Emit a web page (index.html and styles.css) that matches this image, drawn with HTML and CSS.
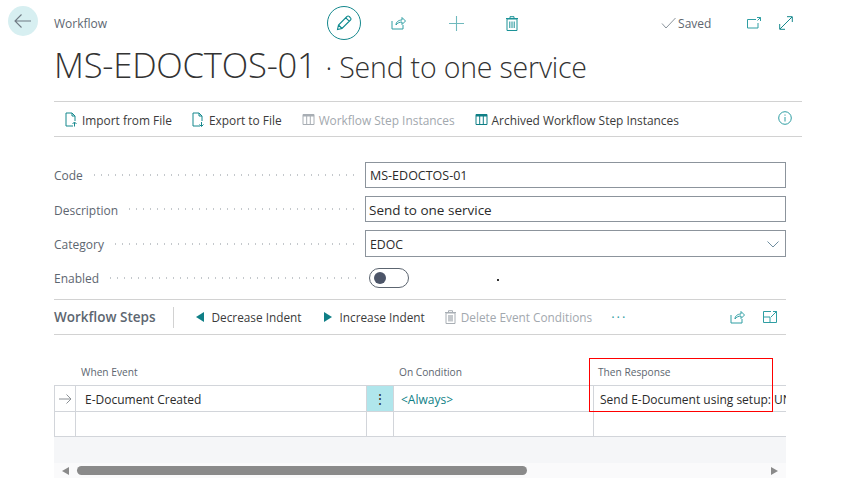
FILE: index.html
```html
<!DOCTYPE html>
<html lang="en">
<head>
<meta charset="utf-8">
<title>Workflow</title>
<link rel="stylesheet" href="styles.css">
</head>
<body>
<div class="page">
  <header class="topbar">
    <button class="back" aria-label="Back"><svg width="20" height="16" viewBox="0 0 20 16"><path d="M18 8H2M8.500 1.500 2 8l6.500 6.500" fill="none" stroke="#6f7a84" stroke-width="1.100"/></svg></button>
    <span class="crumb">Workflow</span>
    <div class="actions">
      <span class="edit"><svg width="18" height="18" viewBox="0 0 18 18"><path d="M2.500 15.500l1-4.500L12 2.500a1.500 1.500 0 0 1 2.200 0l1.300 1.300a1.500 1.500 0 0 1 0 2.200L7 14.500zM3.500 11 7 14.500M10.800 3.800l3.400 3.400" fill="none" stroke="#0f8a8f" stroke-width="1.100"/></svg></span>
      <svg class="act-share" width="15" height="14" viewBox="0 0 15 14"><path d="M1 5v8h11V9M5 9c0-3 2.500-5 6-5V1.500L14.500 5 11 8.500V6C8.500 6 6.500 7 5 9z" fill="none" stroke="#2f9ea3" stroke-width="1"/></svg>
      <svg class="act-plus" width="15" height="15" viewBox="0 0 15 15"><path d="M7.500 0v15M0 7.500h15" stroke="#6fb9bd" stroke-width="1.100"/></svg>
      <svg class="act-trash" width="12" height="15" viewBox="0 0 12 15"><path d="M1 3h10v11.500H1zM0 2.500h12M4 2.500V.7h4v1.800" fill="none" stroke="#1b9297" stroke-width="1"/><path d="M3.800 5.500v6.500M6 5.500v6.500M8.200 5.500v6.500" stroke="#1b9297" stroke-width="1"/></svg>
    </div>
    <div class="status">
      <svg width="15" height="12" viewBox="0 0 15 12"><path d="M1 6.500 5 11 14.500 1" fill="none" stroke="#8a939b" stroke-width="1"/></svg>
      <span>Saved</span>
    </div>
    <svg class="open-new" width="14" height="12" viewBox="0 0 14 12"><path d="M9 2.500H.5v8.500h10.500V6M10 .5h3.500V4M13.500.5 10.500 3.500" fill="none" stroke="#2f9ea3" stroke-width="1"/></svg>
    <svg class="expand" width="14" height="14" viewBox="0 0 14 14"><path d="M1 13 13 1M8 .7h5.300V6M.7 8v5.300H6" fill="none" stroke="#15888d" stroke-width="1"/></svg>
  </header>

  <h1 class="title">MS-EDOCTOS-01 <span class="title-sub">· Send to one service</span></h1>

  <nav class="ribbon">
    <span class="rb"><svg width="13" height="15" viewBox="0 0 13 15"><path d="M8 14H1V1h6l3 3v5M7 1v3h3" fill="none" stroke="#15888d"/><path d="M9.500 14.500v-4M7.500 12l2-2 2 2" fill="none" stroke="#15888d"/></svg>Import from File</span>
    <span class="rb"><svg width="13" height="15" viewBox="0 0 13 15"><path d="M8 14H1V1h6l3 3v5M7 1v3h3" fill="none" stroke="#15888d"/><path d="M9.500 10v4M7.500 12.500l2 2 2-2" fill="none" stroke="#15888d"/></svg>Export to File</span>
    <span class="rb off"><svg width="13" height="11" viewBox="0 0 12 11"><path d="M.5.500h11v10H.5zM4.200.5v10M7.800.5v10" fill="none" stroke="#a8aeb4"/><path d="M.5 1h11v1.500H.5z" fill="#a8aeb4"/></svg>Workflow Step Instances</span>
    <span class="rb"><svg width="13" height="11" viewBox="0 0 12 11"><path d="M.5.500h11v10H.5zM4.200.5v10M7.800.5v10" fill="none" stroke="#0f7f86"/><path d="M.5 1h11v1.500H.5z" fill="#0f7f86"/></svg>Archived Workflow Step Instances</span>
    <svg class="info" width="14" height="14" viewBox="0 0 14 14"><circle cx="7" cy="7" r="6.300" fill="none" stroke="#2f9ea3"/><path d="M7 6v4.500M7 3.500v1.200" stroke="#2f9ea3"/></svg>
  </nav>

  <section class="form">
    <div class="field"><span class="lbl">Code</span><span class="dots"></span><div class="box">MS-EDOCTOS-01</div></div>
    <div class="field"><span class="lbl low">Description</span><span class="dots"></span><div class="box big">Send to one service</div></div>
    <div class="field f-cat"><span class="lbl low">Category</span><span class="dots"></span><div class="box sel">EDOC<svg width="12" height="7" viewBox="0 0 12 7"><path d="M.5.500 6 6 11.500.5" fill="none" stroke="#6f8ea0"/></svg></div></div>
    <div class="field f-en"><span class="lbl">Enabled</span><span class="dots"></span><div class="toggle"><i></i></div><span class="speck"></span></div>
  </section>

  <div class="steps-bar">
    <strong class="steps-title">Workflow Steps</strong>
    <span class="sep"></span>
    <span class="sb"><svg width="8" height="10" viewBox="0 0 8 10"><path d="M8 0v10L0 5z" fill="#0f7f86"/></svg>Decrease Indent</span>
    <span class="sb inc"><svg width="8" height="10" viewBox="0 0 8 10"><path d="M0 0v10l8-5z" fill="#0f7f86"/></svg>Increase Indent</span>
    <span class="sb off"><svg width="11" height="14" viewBox="0 0 11 14"><path d="M1 3h9v10.500H1zM0 2.500h11M3.500 2.500V.7h4v1.800" fill="none" stroke="#a8aeb4"/><path d="M3 5h5v6.500H3z" fill="#c4c8cc"/></svg>Delete Event Conditions</span>
    <span class="more">···</span>
    <svg class="st-share" width="15" height="14" viewBox="0 0 15 14"><path d="M1 5v8h11V9M5 9c0-3 2.500-5 6-5V1.500L14.500 5 11 8.500V6C8.500 6 6.500 7 5 9z" fill="none" stroke="#2f9ea3"/></svg>
    <svg class="st-exp" width="14" height="12" viewBox="0 0 14 12"><path d="M8 .5H.5v11h13V.5H12M.5 6H7v5.500M8 6l5-5M10 .5h3.500V4" fill="none" stroke="#2f9ea3"/></svg>
  </div>

  <section class="table">
    <div class="thead">
      <span></span><span>When Event</span><span></span><span>On Condition</span><span>Then Response</span>
    </div>
    <div class="row">
      <div class="c"><svg width="13" height="10" viewBox="0 0 13 10"><path d="M0 5h12M7.500.5 12 5 7.500 9.500" fill="none" stroke="#8a8f94"/></svg></div>
      <div class="c txt">E-Document Created</div>
      <div class="c kebab">⋮</div>
      <div class="c txt link">&lt;Always&gt;</div>
      <div class="c txt clip">Send E-Document using setup: UNIVERSAL</div>
    </div>
    <div class="row"><div class="c"></div><div class="c"></div><div class="c"></div><div class="c"></div><div class="c"></div></div>
    <div class="gray"></div>
    <div class="scroll">
      <span class="arrow left"></span>
      <div class="track"><div class="thumb"></div></div>
      <span class="arrow right"></span>
    </div>
  </section>
</div>
<div class="highlight"></div>
</body>
</html>
```
FILE: styles.css
```css
* { box-sizing: border-box; }
html, body { margin: 0; height: 100%; background: #fff; overflow: hidden; }
body { font-family: "Open Sans", "Noto Sans", sans-serif; color: #2b2b2b; font-size: 12px; position: relative; }
.page { padding: 6px 0 0 8px; width: 844px; }

.topbar { display: flex; align-items: center; height: 34px; position: relative; }
.back { width: 30px; height: 30px; border-radius: 50%; border: 0; background: #d7eff1; padding: 0; display: flex; align-items: center; justify-content: center; margin-top: -4px; }
.crumb { margin-left: 16px; font-size: 12px; color: #5d6670; }
.actions { display: flex; align-items: center; margin-left: 220px; }
.edit { width: 34px; height: 34px; border: 1px solid #15888d; border-radius: 50%; display: flex; align-items: center; justify-content: center; }
.act-share { margin-left: 30px; }
.act-plus { margin-left: 43px; }
.act-trash { margin-left: 42px; }
.status { display: flex; align-items: center; gap: 2px; margin-left: 143px; font-size: 12px; color: #5d6670; }
.open-new { margin-left: 36px; }
.expand { margin-left: 18px; }

.title { margin: 3px 0 0 46px; font-size: 34.600px; font-weight: 300; line-height: 44px; color: #333; letter-spacing: -.2px; white-space: nowrap; }
.title-sub { font-size: 28.500px; }

.ribbon { margin: 12px 42px 0 46px; height: 36px; border-top: 1px solid #d2d2d2; border-bottom: 1px solid #d2d2d2; display: flex; align-items: center; padding: 1px 0 0 11px; gap: 20px; position: relative; }
.rb { display: flex; align-items: center; gap: 4px; white-space: nowrap; color: #3b3b3b; font-size: 11.900px; }
.rb.off { color: #a2a8ae; }
.info { margin-left: auto; margin-right: 10px; margin-top: -3px; }

.form { margin: 25px 58px 0 46px; }
.field { display: flex; align-items: center; height: 26px; margin-bottom: 8px; }
.f-cat { height: 27px; margin-bottom: 10px; }
.f-en { height: 22px; margin-bottom: 0; }
.lbl { color: #5d6670; white-space: nowrap; }
.low { padding-top: 2px; }
.dots { flex: 1; margin: 0 6px 0 8px; height: 2px; background-image: radial-gradient(circle, #c4c8cc 0.900px, transparent 1px); background-size: 7px 2px; background-repeat: repeat-x; }
.box { width: 421px; height: 100%; border: 1px solid #8c949c; padding-left: 4px; display: flex; align-items: center; color: #2b2b2b; flex: none; font-size: 12.500px; }
.big { font-size: 13.500px; padding: 2px 0 0 3px; }
.sel { justify-content: space-between; padding: 1px 6px 0 4px; font-size: 12.300px; }
.toggle { width: 40px; height: 20px; border: 1px solid #5c6570; border-radius: 10px; margin-left: 4px; margin-right: 377px; padding: 3px 4px; flex: none; }
.toggle i { display: block; width: 12px; height: 12px; border-radius: 50%; background: #4c5568; }
.speck { width: 2px; height: 2px; background: #333; position: absolute; left: 497px; top: 279px; }

.steps-bar { margin: 10px 58px 0 46px; height: 36px; border-top: 1px solid #d2d2d2; border-bottom: 1px solid #d2d2d2; display: flex; align-items: center; position: relative; }
.steps-title { font-weight: 600; color: #5d6670; font-size: 13.500px; white-space: nowrap; }
.sep { width: 1px; height: 21px; background: #d2d2d2; margin: 0 22px 0 18px; }
.sb { display: flex; align-items: center; gap: 7px; margin-right: 23px; white-space: nowrap; color: #3b3b3b; font-size: 11.800px; }
.sb.inc { margin-right: 20px; }
.sb.off { color: #a2a8ae; gap: 5px; margin-right: 19px; }
.more { color: #2f9ea3; letter-spacing: 2px; font-size: 13px; }
.st-share { margin-left: auto; }
.st-exp { margin: 0 9px 0 18px; }

.table { margin: 0 58px 0 46px; width: 732px; }
.thead, .row { display: grid; grid-template-columns: 21px 291px 27px 200px 193px; }
.thead { height: 50px; align-items: end; font-size: 10.200px; color: #5d6670; padding-bottom: 6px; }
.thead span:nth-child(2), .thead span:nth-child(5) { padding-left: 5px; }
.thead span:nth-child(4) { padding-left: 6px; }
.thead span:nth-child(2) { padding-left: 6px; }
.row { height: 25px; border-top: 1px solid #d2d5da; }
.row:nth-of-type(2) { height: 26px; }
.c { border-left: 1px solid #d2d5da; display: flex; align-items: center; min-width: 0; overflow: hidden; }
.c:first-child { justify-content: center; }
.txt { padding: 1px 0 0 9px; white-space: nowrap; color: #2b2b2b; }
.link { color: #0f7f86; padding-left: 7px; }
.clip { padding-left: 6px; }
.kebab { background: #b0e6ec; justify-content: center; font-size: 14px; color: #333; padding: 0; }
.gray { height: 27px; background: #f5f6f8; border-top: 1px solid #d2d5da; }
.scroll { height: 15px; background: #fafafb; display: flex; align-items: center; padding: 0 8px; }
.arrow { width: 0; height: 0; border-top: 4.500px solid transparent; border-bottom: 4.500px solid transparent; flex: none; }
.arrow.left { border-right: 7px solid #8a8a8a; }
.arrow.right { border-left: 7px solid #8a8a8a; }
.track { flex: 1; margin: 0 1px 0 8px; }
.thumb { width: 450px; height: 9px; background: #8a8a8a; border-radius: 5px; }

.highlight { position: absolute; left: 589px; top: 358px; width: 184px; height: 54px; border: 1px solid #f00; }
```
